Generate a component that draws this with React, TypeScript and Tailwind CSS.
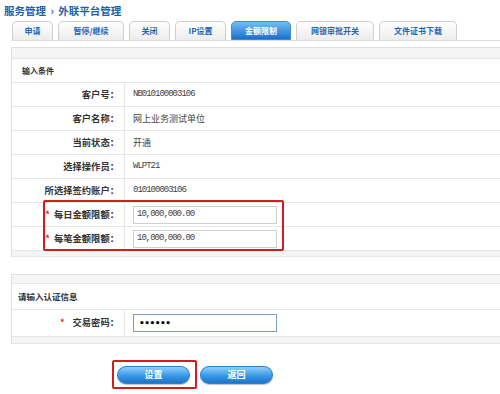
import React from "react";

const CJK = { fontFamily: '"Noto Sans CJK SC", "Liberation Sans", sans-serif' };
const MONO = { fontFamily: '"Liberation Mono", "Noto Sans CJK SC", monospace' };

const tabs = [
  { t: "申请", w: "w-[41px]" },
  { t: "暂停/继续", w: "w-[66px]" },
  { t: "关闭", w: "w-[41px]" },
  { t: "IP设置", w: "w-[51px]" },
  { t: "金额限制", w: "w-[60px]", active: true },
  { t: "网银审批开关", w: "w-[78px]" },
  { t: "文件证书下载", w: "w-[78px]" },
];

function Row({
  label,
  children,
  star,
  starGap = "mr-[4px]",
  h = "h-[24px]",
}: {
  label: string;
  children: React.ReactNode;
  star?: boolean;
  starGap?: string;
  h?: string;
}) {
  return (
    <div className={`flex ${h} border-b border-[#e6e6e6]`}>
      <div className="w-[113px] shrink-0 border-r border-[#e6e6e6] flex items-center justify-end pr-[5px] text-[9.3px] font-bold text-[#333]" style={CJK}>
        {star && <span className={`text-[#e02020] ${starGap} text-[9px]`}>*</span>}
        {label}
      </div>
      <div className="flex-1 flex items-center pl-[8px]">{children}</div>
    </div>
  );
}

function Mono({ children }: { children: React.ReactNode }) {
  return (
    <span className="text-[9px] tracking-[-1px] text-[#444]" style={MONO}>
      {children}
    </span>
  );
}

function Cn({ children }: { children: React.ReactNode }) {
  return (
    <span className="text-[9px] text-[#444]" style={CJK}>
      {children}
    </span>
  );
}

function Input({ value }: { value: string }) {
  return (
    <div className="w-[144px] h-[18px] border border-[#cfcfcf] bg-white flex items-center pl-[3px]">
      <Mono>{value}</Mono>
    </div>
  );
}

function Btn({ text }: { text: string }) {
  return (
    <div
      className="w-[73px] h-[18px] rounded-full border border-[#2a7fcf] bg-gradient-to-b from-[#8fd0ff] via-[#3f9ce8] to-[#1a74cc] flex items-center justify-center text-white text-[9px] font-bold shadow-[0_1px_1px_rgba(0,0,0,0.25)]"
      style={CJK}
    >
      {text}
    </div>
  );
}

export default function App() {
  return (
    <div className="w-[500px] h-[394px] bg-white overflow-hidden relative" style={CJK}>
      <div className="pt-[4px] pl-[4px] text-[10.5px] leading-[14px] font-bold text-[#1f5fa8]">
        服务管理 <span className="mx-[2px]">›</span> 外联平台管理
      </div>

      <div className="mt-[3px] ml-[11px] pl-[1px] h-[20px] flex items-end gap-[5px] border-b border-[#dcdcdc] w-[500px]">
        {tabs.map((tb) =>
          tb.active ? (
            <div
              key={tb.t}
              className={`${tb.w} h-[19px] rounded-t-[5px] border border-[#3d8ad6] bg-gradient-to-b from-[#74bdf5] to-[#1670cc] flex items-center justify-center text-[8px] font-bold text-white`}
            >
              {tb.t}
            </div>
          ) : (
            <div
              key={tb.t}
              className={`${tb.w} h-[19px] rounded-t-[5px] border border-b-0 border-[#cfcfcf] bg-gradient-to-b from-white to-[#ececec] flex items-center justify-center text-[8px] font-bold text-[#1f66b4]`}
            >
              {tb.t}
            </div>
          )
        )}
      </div>

      {/* Panel 1 */}
      <div className="mt-[6px] ml-[11px] w-[500px] border-l border-t border-[#e0e0e0] relative">
        <div className="h-[11px] bg-[#f5f5f5] border-b border-[#e6e6e6]" />
        <div className="h-[24px] border-b border-[#e6e6e6] flex items-center pl-[10px] text-[8px] font-bold text-[#333]">
          输入条件
        </div>
        <Row label="客户号：">
          <Mono>NB010100003106</Mono>
        </Row>
        <Row label="客户名称：">
          <Cn>网上业务测试单位</Cn>
        </Row>
        <Row label="当前状态：">
          <Cn>开通</Cn>
        </Row>
        <Row label="选择操作员：">
          <Mono>WLPT21</Mono>
        </Row>
        <Row label="所选择签约账户：">
          <Mono>010100003106</Mono>
        </Row>
        <Row label="每日金额限额：" star>
          <Input value="10,000,000.00" />
        </Row>
        <Row label="每笔金额限额：" star>
          <Input value="10,000,000.00" />
        </Row>
        <div className="h-[6px] bg-[#f5f5f5] border-b border-[#e6e6e6]" />
        <div className="absolute left-[31px] top-[152px] w-[241px] h-[51px] border-2 border-[#d41c1c] rounded-[2px]" />
      </div>

      {/* Panel 2 */}
      <div className="mt-[17px] ml-[11px] w-[500px] border-l border-t border-[#e0e0e0]">
        <div className="h-[9px] bg-[#f5f5f5] border-b border-[#e6e6e6]" />
        <div className="h-[26px] border-b border-[#e6e6e6] flex items-center pl-[6px] text-[8.5px] font-bold text-[#333]">
          请输入认证信息
        </div>
        <Row label="交易密码：" star starGap="mr-[8px]" h="h-[27px]">
          <div className="w-[144px] h-[18px] border border-[#7b9fc6] bg-white flex items-center pl-[5px] text-[9px] font-bold text-black tracking-[-0.5px] leading-none" style={{ fontFamily: '"DejaVu Sans", sans-serif' }}>
            ••••••
          </div>
        </Row>
        <div className="h-[7px] bg-[#f5f5f5] border-b border-[#e6e6e6]" />
      </div>

      <div className="mt-[16px] ml-[112px] flex items-center gap-[3px]">
        <div className="w-[85px] h-[29px] border-2 border-[#d41c1c] rounded-[2px] flex items-start pt-[4px] pl-[3px]">
          <Btn text="设置" />
        </div>
        <Btn text="返回" />
      </div>
    </div>
  );
}
